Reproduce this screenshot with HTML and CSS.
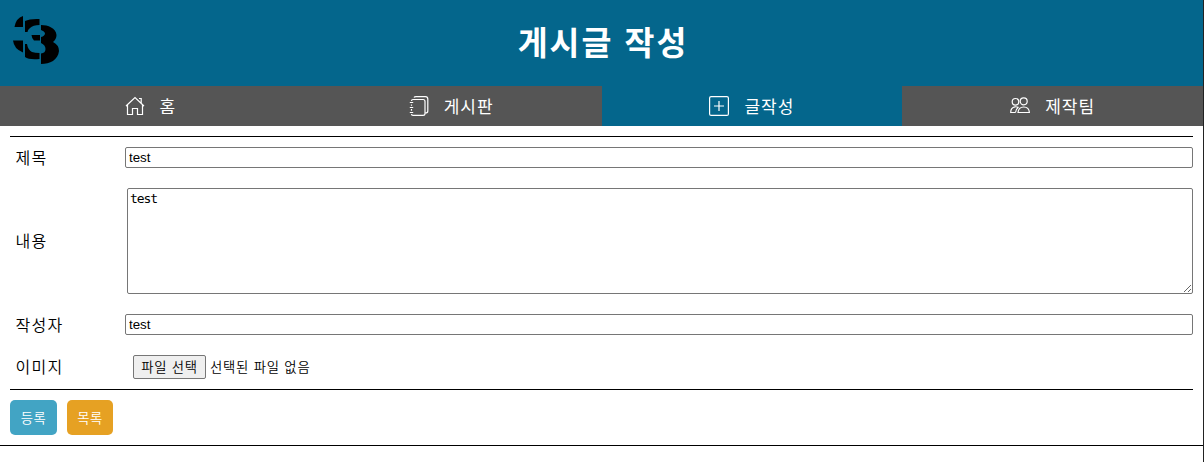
FILE: index.html
```html
<!DOCTYPE html>
<html lang="ko">
<head>
<meta charset="utf-8">
<title>게시글 작성</title>
<link rel="stylesheet" href="styles.css">
</head>
<body>
<div class="page">
  <header class="header">
    <svg class="logo" viewBox="0 0 50 52" width="50" height="52">
      <path d="M13 4V15H4.500Q6 6 13 4Z"/>
      <path d="M3 28.500H13V40.500Q4 37 3 28.500Z"/>
      <path d="M15 9Q20 6.500 29.500 7V13Q23 13 20 16Q17.500 18 17.500 20H15Z"/>
      <path d="M21.500 23H30V28.500H24Q22 27 21.500 23Z"/>
      <path d="M15 32H17Q18 38 22 40Q25 41 29.500 41V47Q19 48 15 45Z"/>
      <path d="M31 13C38 13 46 16 46.500 23Q46.500 27 43 30Q49 33 49 39C48 48 40 52 31 52V41.500Q35.500 41 35.500 37Q35.500 33 31 31V25Q35 24 35 21Q34 19 31 18Z"/>
    </svg>
    <h1 class="title">게시글 작성</h1>
  </header>
  <nav class="nav">
    <a class="tab">
      <svg class="icon" viewBox="0 0 20 20"><path d="M1 10L10 1.500L19 10M2.500 9V18.500H7.500V12.500H12.500V18.500H17.500V9M14 2.500H16.200V7"/></svg>
      <span>홈</span>
    </a>
    <a class="tab">
      <svg class="icon" viewBox="0 0 20 20"><path d="M5 1.500Q5.500 .6 7 .6H16.500Q18.800 .6 18.800 3V15Q18.800 17 16.500 17M4 3.500H14Q16 3.500 16 5.500V17.500Q16 19.400 14 19.400H4Q2.500 19.400 2.500 18M2.500 5Q2.500 3.500 4 3.500M2.500 8.500V9.800M2.500 13V14.800M.8 6.500H4.200M.8 11.500H4.200M.8 16.500H4.200"/></svg>
      <span>게시판</span>
    </a>
    <a class="tab active">
      <svg class="icon" viewBox="0 0 20 20"><rect x=".6" y=".6" width="18.800" height="18.800" rx="1.500"/><path d="M10 5V15M5 10H15"/></svg>
      <span>글작성</span>
    </a>
    <a class="tab">
      <svg class="icon" viewBox="0 0 20 20"><circle cx="5.500" cy="5.800" r="3.300"/><circle cx="13.700" cy="5.300" r="3.500"/><path d="M8 16.500Q8.500 11 13.800 11Q19 11 19.400 16.500ZM5.500 16.500H.7Q.7 11.500 5 10.800Q7 10.600 8 11.500M5.500 16.500Q5.800 13 8.500 11"/></svg>
      <span>제작팀</span>
    </a>
  </nav>
  <main class="main">
    <form class="form">
      <div class="row row-title"><label class="label" for="title">제목</label><input id="title" class="field" type="text" value="test"></div>
      <div class="row row-content"><label class="label" for="content">내용</label><textarea id="content" class="area">test</textarea></div>
      <div class="row row-author"><label class="label" for="author">작성자</label><input id="author" class="field" type="text" value="test"></div>
      <div class="row row-file"><span class="label">이미지</span><button type="button" class="pick">파일 선택</button><span class="file-name">선택된 파일 없음</span></div>
    </form>
    <div class="actions"><button class="btn submit">등록</button><button class="btn list">목록</button></div>
  </main>
</div>
</body>
</html>
```
FILE: styles.css
```css
* { box-sizing: border-box; }
body {
  margin: 0;
  background: #fff;
  color: #000;
  font-family: "Noto Sans CJK KR", sans-serif;
}
.page { height: 462px; border-right: 1px solid #222; }
.header {
  display: grid;
  grid-template-columns: 50px 1fr 50px;
  align-items: center;
  height: 86px;
  padding: 0 10px 4px;
  background: #04668c;
}
.logo { fill: #000; margin-top: -6px; }
.title {
  margin: 0;
  padding-left: 3px;
  color: #fff;
  text-align: center;
  font-size: 32.5px;
  line-height: 48px;
  font-weight: 700;
  letter-spacing: 2px;
}
.nav { display: grid; grid-template-columns: repeat(4, 1fr); height: 40px; }
.tab {
  display: flex;
  align-items: center;
  justify-content: center;
  gap: 15px;
  background: #555;
  color: #fff;
  font-size: 17px;
  line-height: 24px;
  letter-spacing: 1px;
}
.active { background: #04668c; }
.icon { width: 20px; height: 20px; fill: none; stroke: #fff; stroke-width: 1.2; }
.main { height: 320px; padding: 10px 10px 0 10px; border-bottom: 1px solid #000; }
.form {
  height: 254px;
  padding-top: 10px;
  border-top: 1px solid #000;
  border-bottom: 1px solid #000;
}
.row { display: flex; align-items: center; }
.row-title { height: 21px; }
.row-content { height: 106px; margin-top: 20px; }
.row-author { height: 21px; margin-top: 20px; }
.row-file { height: 24px; margin-top: 20px; }
.label {
  flex: 0 0 115px;
  padding: 0 0 2px 5.500px;
  font-size: 16px;
  line-height: 20px;
  font-weight: 350;
  letter-spacing: 1.3px;
}
.field {
  flex: 1;
  min-width: 0;
  height: 21px;
  padding: 1px 3px;
  border: 1px solid #767676;
  border-radius: 2px;
  font: 13.333px "Liberation Sans", sans-serif;
}
.area {
  flex: 1;
  height: 106px;
  margin: 0 0 0 2px;
  padding: 2px;
  border: 1px solid #767676;
  border-radius: 2px;
  font: 13px/15px "DejaVu Sans Mono", monospace;
  letter-spacing: -1.1px;
}
.pick {
  width: 73px;
  height: 24px;
  margin-left: 8px;
  padding: 0;
  border: 1px solid #767676;
  border-radius: 2px;
  background: #efefef;
  color: #000;
  font: 350 13.333px/20px "Noto Sans CJK KR", sans-serif;
  letter-spacing: .7px;
}
.file-name { margin-left: 4px; font-size: 13.333px; font-weight: 350; line-height: 20px; letter-spacing: .8px; }
.actions { display: flex; gap: 10px; padding-top: 10px; }
.btn {
  height: 35px;
  padding: 0;
  border: 0;
  border-radius: 5px;
  color: #fff;
  font: 350 13.333px/20px "Noto Sans CJK KR", sans-serif;
  letter-spacing: .6px;
}
.submit { width: 47px; background: #42a4c4; }
.list { width: 46px; background: #e6a123; }
```
